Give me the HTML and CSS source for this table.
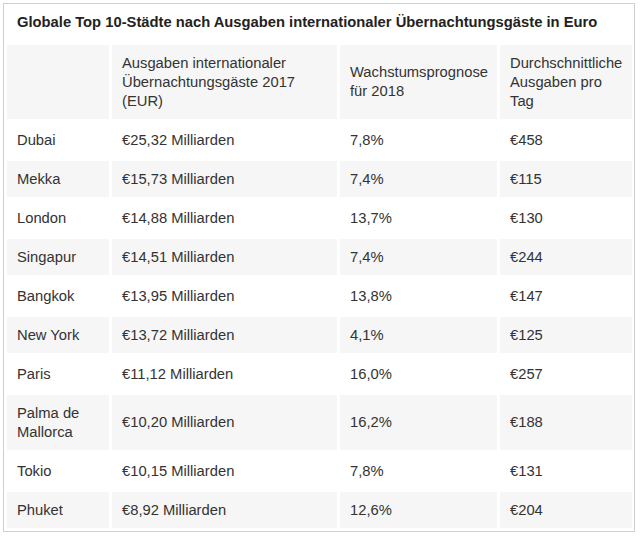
FILE: index.html
```html
<!DOCTYPE html>
<html lang="de">
<head>
<meta charset="utf-8">
<title>Globale Top 10-Städte</title>
<link rel="stylesheet" href="styles.css">
</head>
<body>
<div class="box">
  <div class="title">Globale Top 10-Städte nach Ausgaben internationaler Übernachtungsgäste in Euro</div>
  <table class="data">
    <colgroup>
      <col class="c1"><col class="c2"><col class="c3"><col class="c4">
    </colgroup>
    <thead>
      <tr>
        <th></th>
        <th>Ausgaben internationaler Übernachtungsgäste 2017 (EUR)</th>
        <th>Wachstumsprognose für 2018</th>
        <th>Durchschnittliche Ausgaben pro Tag</th>
      </tr>
    </thead>
    <tbody>
      <tr><td>Dubai</td><td>€25,32 Milliarden</td><td>7,8%</td><td>€458</td></tr>
      <tr><td>Mekka</td><td>€15,73 Milliarden</td><td>7,4%</td><td>€115</td></tr>
      <tr><td>London</td><td>€14,88 Milliarden</td><td>13,7%</td><td>€130</td></tr>
      <tr><td>Singapur</td><td>€14,51 Milliarden</td><td>7,4%</td><td>€244</td></tr>
      <tr><td>Bangkok</td><td>€13,95 Milliarden</td><td>13,8%</td><td>€147</td></tr>
      <tr><td>New York</td><td>€13,72 Milliarden</td><td>4,1%</td><td>€125</td></tr>
      <tr><td>Paris</td><td>€11,12 Milliarden</td><td>16,0%</td><td>€257</td></tr>
      <tr><td>Palma de Mallorca</td><td>€10,20 Milliarden</td><td>16,2%</td><td>€188</td></tr>
      <tr><td>Tokio</td><td>€10,15 Milliarden</td><td>7,8%</td><td>€131</td></tr>
      <tr><td>Phuket</td><td>€8,92 Milliarden</td><td>12,6%</td><td>€204</td></tr>
    </tbody>
  </table>
</div>
</body>
</html>
```
FILE: styles.css
```css
html, body {
  margin: 0;
  padding: 0;
  background: #ffffff;
}
body {
  padding: 3px 0 0 3px;
  font-family: "Liberation Sans", Arial, sans-serif;
  font-size: 14.75px;
  color: #333333;
}
.box {
  width: 630px;
  border: 1px solid #cfcfcf;
}
.title {
  height: 37px;
  box-sizing: border-box;
  padding: 9px 0 0 13px;
  font-weight: bold;
  font-size: 14.75px;
  line-height: 19px;
  color: #222222;
  white-space: nowrap;
}
.data {
  width: 100%;
  table-layout: fixed;
  border-collapse: separate;
  border-spacing: 3px 3px;
  margin-top: 1px;
}
.c1 { width: 102px; }
.c2 { width: 225px; }
.c3 { width: 157px; }
.c4 { width: 132px; }
.data th,
.data td {
  text-align: left;
  font-weight: normal;
  vertical-align: middle;
  padding: 8.5px 10px;
  line-height: 19px;
  color: #333333;
}
.data thead th {
  background: #f6f6f6;
}
.data tbody tr:nth-child(even) td {
  background: #f6f6f6;
}
```
